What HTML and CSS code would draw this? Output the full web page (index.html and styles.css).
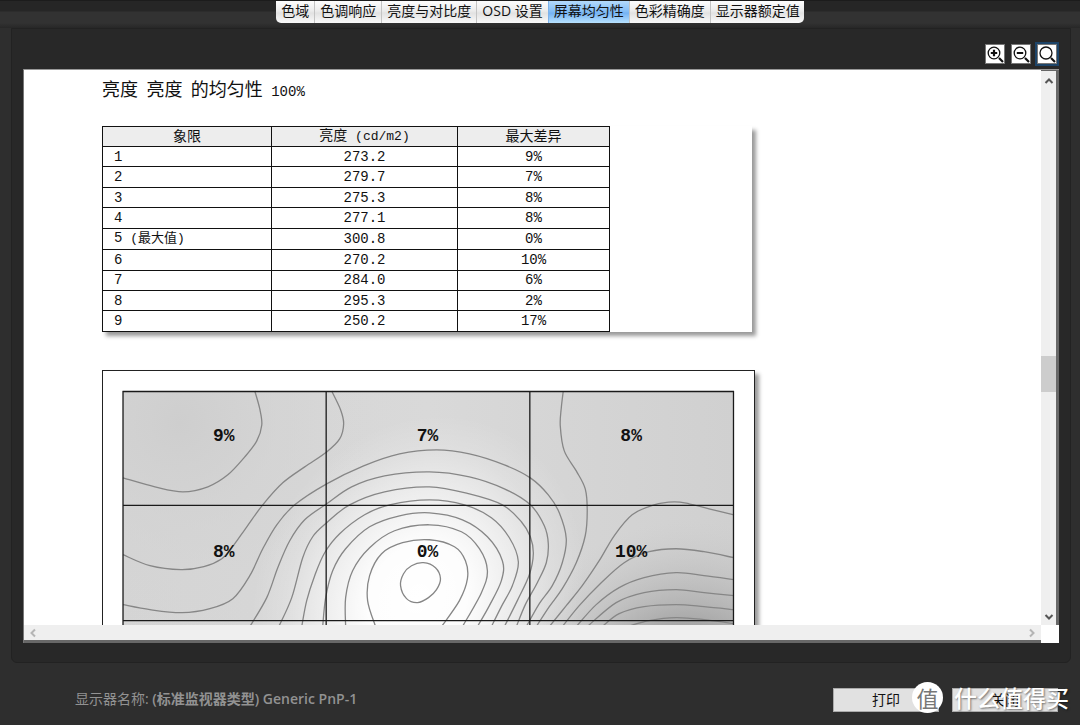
FILE: index.html
```html
<!DOCTYPE html>
<html lang="zh-CN">
<head>
<meta charset="utf-8">
<title>屏幕均匀性</title>
<link rel="stylesheet" href="styles.css">
</head>
<body>
<nav class="tabs">
  <button class="tab">色域</button>
  <button class="tab">色调响应</button>
  <button class="tab">亮度与对比度</button>
  <button class="tab">OSD 设置</button>
  <button class="tab active">屏幕均匀性</button>
  <button class="tab">色彩精确度</button>
  <button class="tab">显示器额定值</button>
</nav>

<main class="panel">
  <div class="tools">
    <button class="tool" aria-label="放大"><svg viewBox="0 0 18 18"><circle cx="8" cy="8" r="5.8"/><path class="thick" d="M4.8 8h6.4M8 4.8v6.4M13 13l4 4"/></svg></button>
    <button class="tool" aria-label="缩小"><svg viewBox="0 0 18 18"><circle cx="8" cy="8" r="5.8"/><path class="thick" d="M4.8 8h6.4M13 13l4 4"/></svg></button>
    <button class="tool focused" aria-label="实际大小"><svg viewBox="0 0 18 18"><circle cx="8" cy="8" r="6"/><path class="thick" d="M13 13l4 4"/></svg></button>
  </div>

  <div class="viewer">
    <section class="page">
      <h1 class="title">亮度<span class="num"> </span>亮度<span class="num"> </span>的均匀性<span class="num"> 100%</span></h1>
      <div class="table-card">
        <table class="results">
          <colgroup><col class="c1"><col class="c2"><col class="c3"></colgroup>
          <thead><tr><th>象限</th><th>亮度<span class="unit"> (cd/m2)</span></th><th>最大差异</th></tr></thead>
          <tbody>
            <tr><td>1</td><td>273.2</td><td>9%</td></tr>
            <tr><td>2</td><td>279.7</td><td>7%</td></tr>
            <tr><td>3</td><td>275.3</td><td>8%</td></tr>
            <tr><td>4</td><td>277.1</td><td>8%</td></tr>
            <tr><td>5<span class="unit"> (最大值)</span></td><td>300.8</td><td>0%</td></tr>
            <tr><td>6</td><td>270.2</td><td>10%</td></tr>
            <tr><td>7</td><td>284.0</td><td>6%</td></tr>
            <tr><td>8</td><td>295.3</td><td>2%</td></tr>
            <tr><td>9</td><td>250.2</td><td>17%</td></tr>
          </tbody>
        </table>
      </div>
      <div class="plot-card">
        <svg class="plot" viewBox="122 389 614 346">
          <defs>
            <radialGradient id="peak" gradientUnits="userSpaceOnUse" cx="0" cy="0" r="1" gradientTransform="translate(418 598) rotate(-62) scale(190 160)">
              <stop offset="0" stop-color="#fff"/>
              <stop offset=".3" stop-color="#fff" stop-opacity=".95"/>
              <stop offset=".6" stop-color="#fff" stop-opacity=".5"/>
              <stop offset=".8" stop-color="#fff" stop-opacity=".18"/>
              <stop offset="1" stop-color="#fff" stop-opacity="0"/>
            </radialGradient>
            <radialGradient id="low" gradientUnits="userSpaceOnUse" cx="0" cy="0" r="1" gradientTransform="translate(690 690) scale(180 170)">
              <stop offset="0" stop-color="#888"/>
              <stop offset=".4" stop-color="#a0a0a0" stop-opacity=".85"/>
              <stop offset="1" stop-color="#c8c8c8" stop-opacity="0"/>
            </radialGradient>
            <radialGradient id="corner" gradientUnits="userSpaceOnUse" cx="180" cy="422" r="220">
              <stop offset="0" stop-color="#cecece"/>
              <stop offset="1" stop-color="#d8d8d8" stop-opacity="0"/>
            </radialGradient>
            <linearGradient id="base" x1="0" x2="1" y1="0" y2="0">
              <stop offset="0" stop-color="#d4d4d4"/>
              <stop offset=".5" stop-color="#d9d9d9"/>
              <stop offset="1" stop-color="#d0d0d0"/>
            </linearGradient>
          </defs>
          <rect fill="url(#base)" x="123" y="390" width="612" height="344"/>
          <rect fill="url(#corner)" x="123" y="390" width="612" height="344"/>
          <rect fill="url(#low)" x="123" y="390" width="612" height="344"/>
          <rect fill="url(#peak)" x="123" y="390" width="612" height="344"/>
          <g id="contours" class="contours"></g>
          <path class="grid" d="M122.5 390.5H735M122.5 504.5H735M122.5 620H735M123 390V735M326.5 390V735M530.5 390V735M734.5 390V735"/>
          <g class="labels">
            <text x="224" y="440">9%</text><text x="428" y="440">7%</text><text x="632" y="440">8%</text>
            <text x="224" y="556">8%</text><text x="428" y="556">0%</text><text x="632" y="556">10%</text>
          </g>
        </svg>
      </div>
    </section>
    <div class="vbar">
      <svg class="arrow" viewBox="0 0 10 10"><path d="M1.5 7L5 3.5L8.5 7"/></svg>
      <div class="vtrack"><div class="thumb"></div></div>
      <svg class="arrow" viewBox="0 0 10 10"><path d="M1.5 3L5 6.5L8.5 3"/></svg>
    </div>
    <div class="hbar">
      <svg class="arrow" viewBox="0 0 10 10"><path d="M7 1.5L3.5 5L7 8.5"/></svg>
      <svg class="arrow" viewBox="0 0 10 10"><path d="M3 1.5L6.5 5L3 8.5"/></svg>
    </div>
    <div class="resize"></div>
  </div>
</main>

<footer class="footer">
  <p class="monitor">显示器名称: <b>(标准监视器类型) Generic PnP-1</b></p>
  <button class="action">打印</button>
  <button class="action">关闭</button>
  <div class="mark"><span class="seal">值</span><span class="brand">什么值得买</span></div>
</footer>
<script src="contours.js"></script>
</body>
</html>
```

FILE: styles.css
```css
* { box-sizing: border-box; }

body {
  margin: 0;
  min-height: 100vh;
  display: flex;
  flex-direction: column;
  background: #2e2e2e;
  font-family: "Open Sans", "Noto Sans CJK SC", sans-serif;
  font-size: 14px;
}

button { font: inherit; margin: 0; }

.tabs {
  display: flex;
  justify-content: center;
  height: 28px;
  padding-bottom: 5px;
  border-top: 1px solid #1c1c1c;
  background: linear-gradient(#262626 0 10px, #323232 11px 22px, #272727);
}

.tab {
  padding: 0 5px 2px;
  border: 0;
  border-left: 1px solid #c4c4c4;
  background: linear-gradient(#fdfdfd, #ececec 45%, #e2e2e2 55%, #fafafa);
  color: #111;
  line-height: 18px;
  white-space: nowrap;
}

.tab:first-child { border-left: 0; border-radius: 0 0 0 5px; }
.tab:last-child { padding-right: 4px; border-radius: 0 0 5px 0; }
.tab.active {
  border-color: #7fb2ea;
  background: linear-gradient(#b4dafc, #80bbf5 50%, #74b2f3 55%, #b8e2ff);
}

.panel {
  flex: 1;
  display: flex;
  flex-direction: column;
  margin: 0 9px 0 11px;
  padding: 13px 11px 19px;
  border: 1px solid #222;
  border-radius: 0 0 6px 6px;
  background: #282828;
}

.tools {
  display: flex;
  justify-content: flex-end;
  gap: 2px;
  height: 27px;
}

.tool {
  width: 24px;
  height: 24px;
  padding: 2px;
  border: 0;
  background: transparent;
}

.tool.focused { background: #1d4468; }

.tool svg {
  display: block;
  width: 20px;
  height: 20px;
  border: 1px solid #777;
  background: #fff;
  fill: none;
  stroke: #111;
  stroke-width: 1.3;
}

.tool .thick { stroke-width: 2.2; }

.viewer {
  flex: 1;
  display: grid;
  grid-template-columns: minmax(0, 1fr) 18px;
  grid-template-rows: minmax(0, 1fr) 18px;
  border-top: 1px solid #999;
  border-left: 1px solid #777;
  background: #fff;
}

.page {
  overflow: hidden;
  height: 0;
  min-height: 100%;
  padding: 7px 78px 0;
  color: #111;
  font-family: "Liberation Mono", "Noto Sans CJK SC", monospace;
}

.title {
  margin: 0 0 20px;
  font-size: 18px;
  line-height: 28px;
  font-weight: 400;
}

.title .num { font-size: 14px; }

.table-card {
  max-width: 650px;
  box-shadow: 4px 4px 4px rgba(0, 0, 0, .4);
}

.results {
  width: 507px;
  height: 206px;
  table-layout: fixed;
  border-collapse: collapse;
  line-height: 18px;
}

.c1 { width: 169px; }
.c2 { width: 186px; }
.c3 { width: 152px; }

.results th,
.results td {
  padding: 0;
  border: 1px solid #111;
  font-weight: 400;
  text-align: center;
}

.results th { background: #ededed; }
.results td:first-child { padding-left: 11px; text-align: left; }
.unit { font-size: 13px; }

.plot-card {
  max-width: 653px;
  margin-top: 38px;
  padding: 19px;
  border: 1px solid #222;
  box-shadow: 4px 4px 4px rgba(0, 0, 0, .4);
}

.plot { display: block; width: 100%; }
.contours { fill: none; stroke: #868686; stroke-width: 1.3; }
.grid { fill: none; stroke: #1a1a1a; stroke-width: 1.3; }
.labels { font-size: 18px; font-weight: 700; text-anchor: middle; fill: #111; }

.vbar {
  display: flex;
  flex-direction: column;
  align-items: center;
  justify-content: space-between;
  padding: 5px 0 3px;
  border-top: 1px solid #666;
  border-right: 3px solid #686868;
  background: #efefef;
}

.vtrack {
  flex: 1;
  width: 100%;
  display: flex;
  flex-direction: column;
}

.vtrack::before { content: ""; flex: 268; }
.vtrack::after { content: ""; flex: 219; }
.thumb { flex: 36; background: #cdcdcd; }

.hbar {
  display: flex;
  align-items: center;
  justify-content: space-between;
  padding: 0 4px;
  border-bottom: 3px solid #686868;
  background: #efefef;
}

.arrow {
  width: 10px;
  height: 10px;
  fill: none;
  stroke: #555;
  stroke-width: 2;
}

.hbar .arrow { stroke: #b5b5b5; }
.resize { background: #fff; }

.footer {
  position: relative;
  display: flex;
  align-items: center;
  gap: 13px;
  height: 62px;
  padding: 12px 22px 0 75px;
}

.monitor {
  flex: 1;
  margin: 0;
  padding-bottom: 5px;
  color: #929292;
}

.monitor b { font-weight: 600; }

.action {
  width: 106px;
  height: 24px;
  padding: 0;
  border: 1px solid #aaa;
  background: #e1e1e1;
  color: #111;
  line-height: 20px;
}

.mark {
  position: absolute;
  right: 11px;
  top: 18px;
  display: flex;
  align-items: center;
  gap: 11px;
  color: #fff;
  font-family: "Noto Sans CJK SC", sans-serif;
}

.seal {
  width: 31px;
  height: 31px;
  border-radius: 50%;
  background: #fff;
  color: #777;
  font-size: 22px;
  line-height: 30px;
  text-align: center;
}

.brand {
  font-size: 23px;
  line-height: 32px;
  font-weight: 500;
  text-shadow: 1px 1px 2px rgba(0, 0, 0, .5);
}
```

FILE: contours.js
```js
// Points of each iso-luminance line, in plot units.
const lines = [
  [255,390, 260,408, 262,424, 257,440, 245,456, 228,474, 208,486, 183,491, 155,486, 123,477],
  [332,390, 341,409, 344,423, 340,438, 327,451, 305,466, 283,482, 263,504, 247,526, 232,547, 222,558, 204,566, 181,569, 150,565, 123,554],
  [123,604, 150,609, 182,612, 210,608, 233,598, 250,575, 263,548, 277,524, 295,504, 327,483, 364,465, 400,453, 437,449, 470,453, 505,464, 531,477, 549,494, 560,512, 567,538, 563,562, 553,585, 540,603, 527,626],
  [250,626, 267,597, 278,567, 290,540, 305,519, 327,503, 352,486, 385,475, 430,471, 470,476, 505,488, 531,504, 545,525, 549,543, 547,562, 538,582, 526,604, 517,626],
  [279,626, 292,597, 303,557, 313,536, 327,522, 350,504, 385,491, 430,486, 470,493, 503,504, 522,521, 531,536, 534,553, 530,574, 518,600, 505,626],
  [302,626, 307,600, 315,575, 325,552, 340,533, 365,514, 390,504, 430,499, 465,504, 492,517, 510,537, 519,561, 513,585, 502,606, 492,626],
  [323,626, 326,597, 333,570, 346,548, 370,526, 400,515, 430,512, 463,519, 488,536, 503,560, 502,580, 490,605, 478,626],
  [346,626, 346,597, 353,570, 370,547, 395,530, 430,524, 462,531, 480,548, 488,570, 482,592, 463,626],
  [376,626, 368,600, 370,575, 382,553, 403,542, 430,539, 455,546, 466,560, 468,578, 460,600, 442,626],
  [441,578, 437,589, 429,597, 418,602, 407,598, 401,585, 404,573, 412,565, 424,562, 436,567, 441,578],
  [564,390, 562,407, 561,425, 565,450, 577,470, 586,488, 588,510, 586,535, 577,562, 563,588, 550,606, 537,626],
  [735,514, 710,508, 690,503, 675,501, 655,504, 633,514, 615,535, 600,560, 583,585, 567,605, 550,626],
  [735,557, 705,551, 677,548, 650,551, 625,562, 600,584, 580,605, 563,626],
  [735,579, 705,575, 677,572, 645,577, 620,587, 597,604, 577,626],
  [735,595, 705,592, 677,589, 645,592, 617,602, 588,626],
  [735,609, 705,606, 677,604, 645,606, 620,613, 603,626],
  [735,623, 705,619, 677,617, 650,620, 628,626]
];

// Catmull-Rom spline through the points, written as cubic segments.
function spline(flat) {
  const p = [];
  for (let i = 0; i < flat.length; i += 2) p.push([flat[i], flat[i + 1]]);
  const n = p.length;
  const closed = p[0][0] === p[n - 1][0] && p[0][1] === p[n - 1][1];
  let d = `M${p[0]}`;
  for (let i = 0; i < n - 1; i++) {
    const a = p[i - 1] || (closed ? p[n - 2] : p[i]);
    const b = p[i];
    const c = p[i + 1];
    const e = p[i + 2] || (closed ? p[1] : c);
    d += `C${b[0] + (c[0] - a[0]) / 6},${b[1] + (c[1] - a[1]) / 6} ` +
         `${c[0] - (e[0] - b[0]) / 6},${c[1] - (e[1] - b[1]) / 6} ${c}`;
  }
  return d;
}

const group = document.getElementById("contours");
for (const line of lines) {
  const path = document.createElementNS("http://www.w3.org/2000/svg", "path");
  path.setAttribute("d", spline(line));
  group.append(path);
}
```
